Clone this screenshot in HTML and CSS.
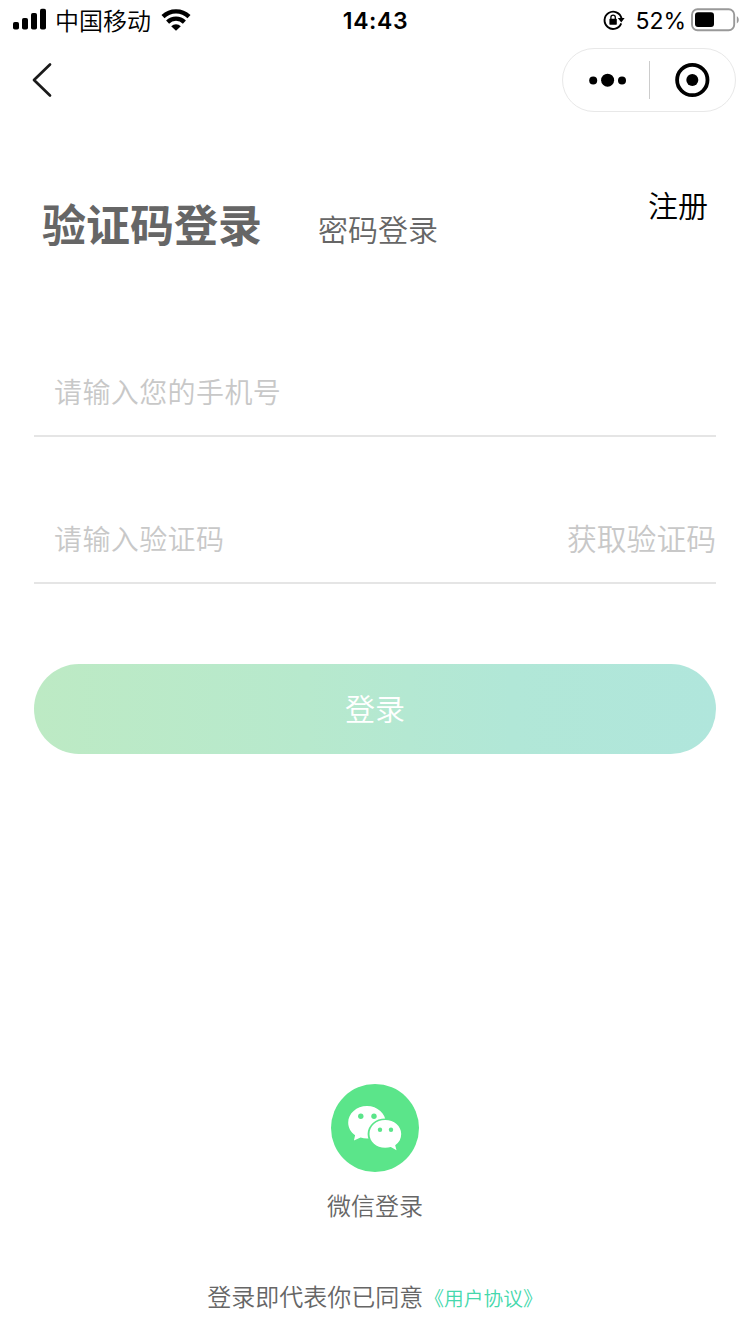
FILE: index.html
```
<!DOCTYPE html>
<html lang="zh-CN">
<head>
<meta charset="UTF-8">
<meta name="viewport" content="width=device-width, initial-scale=1.0">
<title>验证码登录</title>
<link rel="stylesheet" href="styles.css">
</head>
<body>
<div class="statusbar">
  <div class="status-left">
    <svg class="signal" width="34" height="22" viewBox="0 0 34 22">
      <rect x="0" y="14" width="6" height="7.500" rx="1.800"/>
      <rect x="9" y="10" width="6" height="11.500" rx="1.800"/>
      <rect x="18" y="5" width="6" height="16.500" rx="1.800"/>
      <rect x="27" y="0.800" width="6" height="20.700" rx="1.800"/>
    </svg>
    <span class="carrier">中国移动</span>
    <svg class="wifi" width="30" height="22" viewBox="0 0 30 22">
      <path d="M2 7.600a18.600 18.600 0 0 1 26 0M6.600 13.100a12 12 0 0 1 16.800 0" fill="none" stroke="#000" stroke-width="4.300"/>
      <path d="M10.200 17.200a7 7 0 0 1 9.600 0L15 21.800z"/>
    </svg>
  </div>
  <span class="clock">14:43</span>
  <div class="status-right">
    <svg class="lock" width="22" height="22" viewBox="0 0 22 22">
      <path d="M18.200 14.300A8.600 8.600 0 1 1 18.500 9.300" fill="none" stroke="#000" stroke-width="1.900"/>
      <path d="M14.800 9h6.800l-3.300 4.600z"/>
      <rect x="6.400" y="9.800" width="7.400" height="5.900" rx="0.600"/>
      <path d="M7.900 10V8.300a2.200 2.200 0 0 1 4.400 0V10" fill="none" stroke="#000" stroke-width="1.300"/>
    </svg>
    <span class="percent">52%</span>
    <svg class="battery" width="49" height="24" viewBox="0 0 49 24">
      <rect x="1" y="1.200" width="42.200" height="21" rx="5.500" fill="none" stroke="#999" stroke-width="1.900"/>
      <rect x="4" y="4.300" width="19" height="14.800" rx="3"/>
      <path d="M45.800 8.200c2.600 1.200 2.600 6 0 7.200z" fill="#999"/>
    </svg>
  </div>
</div>

<div class="navbar">
  <svg class="back" width="22" height="36" viewBox="0 0 22 36">
    <path d="M19 2.500L3 18l16 15.500" fill="none" stroke="#1a1a1a" stroke-width="2.700" stroke-linecap="round" stroke-linejoin="round"/>
  </svg>
  <div class="capsule">
    <svg class="more" width="38" height="14" viewBox="0 0 38 14">
      <circle cx="4.200" cy="7.600" r="4"/>
      <circle cx="18.600" cy="7.200" r="6.500"/>
      <circle cx="33" cy="7.600" r="4"/>
    </svg>
    <span class="capsule-line"></span>
    <svg class="close" width="36" height="36" viewBox="0 0 36 36">
      <circle cx="18.300" cy="18" r="15.200" fill="none" stroke="#000" stroke-width="3.800"/>
      <circle cx="18.300" cy="18" r="6"/>
    </svg>
  </div>
</div>

<main class="login">
  <div class="tabs">
    <h1 class="tab-active">验证码登录</h1>
    <span class="tab">密码登录</span>
    <a class="register">注册</a>
  </div>

  <form class="form">
    <div class="field">
      <input class="input" type="tel" placeholder="请输入您的手机号">
    </div>
    <div class="field">
      <input class="input" type="text" placeholder="请输入验证码">
      <span class="get-code">获取验证码</span>
    </div>
    <button class="submit" type="button">登录</button>
  </form>
</main>

<footer class="bottom">
  <svg class="wechat" width="88" height="88" viewBox="0 0 88 88">
    <circle cx="44" cy="44" r="44" fill="#5be58a"/>
    <path d="M36 22C25.500 22 17.200 29.500 17.200 38.500c0 5.300 2.600 9.600 6.900 12.700L22.900 56.600l6.700-3.100c2 .6 4.200 1 6.400 1 10.500 0 18.800-7.200 18.800-16S46.500 22 36 22z" fill="#fff"/>
    <ellipse cx="54.200" cy="50" rx="17.600" ry="15.600" fill="#5be58a"/>
    <path d="M54.200 36C45.300 36 38.500 42.100 38.500 49.900s6.800 13.900 15.700 13.900c2 0 3.900-.3 5.600-.8l5.700 3.200-1.300-5c3.900-2.600 6-6.700 6-11.300C70.200 42.100 63.100 36 54.200 36z" fill="#fff"/>
    <g fill="#5be58a">
      <circle cx="29.800" cy="32.300" r="2.700"/>
      <circle cx="43" cy="32.300" r="2.700"/>
      <circle cx="49" cy="45.700" r="2.200"/>
      <circle cx="60" cy="45.700" r="2.200"/>
    </g>
  </svg>
  <span class="wechat-text">微信登录</span>
  <p class="agree">登录即代表你已同意<a class="agree-link">《用户协议》</a></p>
</footer>
</body>
</html>
```
FILE: styles.css
```
* {
  box-sizing: border-box;
}
body {
  margin: 0;
  height: 1334px;
  display: flex;
  flex-direction: column;
  background-color: #fff;
  color: #000;
  font-family: "Noto Sans CJK SC", sans-serif;
  font-weight: 350;
}
svg {
  display: block;
  flex-shrink: 0;
}

/* 状态栏 */
.statusbar {
  display: grid;
  grid-template-columns: 1fr auto 1fr;
  align-items: center;
  height: 40px;
  padding: 0 10px 0 13px;
  line-height: 38px;
}
.status-left,
.status-right {
  display: flex;
  align-items: center;
}
.status-left {
  padding-bottom: 1px;
}
.status-right {
  justify-content: flex-end;
}
.signal {
  margin-bottom: 1px;
}
.carrier {
  margin: 0 10px 0 8px;
  font-size: 24px;
}
.clock {
  padding: 1px 2px 0 0;
  font-family: Inter, sans-serif;
  font-size: 23px;
  font-weight: 600;
  letter-spacing: 0.6px;
}
.percent {
  margin: 0 5px 0 10px;
  padding-top: 1px;
  font-family: Inter, sans-serif;
  font-size: 23px;
  font-weight: 400;
}

.navbar {
  display: flex;
  align-items: center;
  justify-content: space-between;
  height: 80px;
  padding: 0 14px 0 31px;
}
.capsule {
  display: flex;
  align-items: center;
  width: 174px;
  height: 64px;
  padding-left: 26px;
  border: 1px solid #e8e8e8;
  border-radius: 32px;
}
.capsule-line {
  width: 1px;
  height: 38px;
  margin: 0 24px 0 22px;
  background-color: #ccc;
}

.login {
  padding: 74px 34px 0;
}
.tabs {
  display: flex;
  align-items: flex-start;
  height: 60px;
  padding: 0 8px;
  color: #666;
}
.tab-active {
  margin: 0;
  font-size: 44px;
  font-weight: 700;
  line-height: 58px;
}
.tab {
  margin: 15px 0 0 56px;
  font-size: 30px;
  line-height: 38px;
}
.register {
  margin: -9px 0 0 auto;
  color: #000;
  font-size: 30px;
  line-height: 38px;
}

.form {
  display: flex;
  flex-direction: column;
  margin-top: 95px;
}
.field {
  display: flex;
  align-items: center;
  height: 88px;
  margin-bottom: 59px;
  padding: 0 0 2px 20px;
  border-bottom: 2px solid #e5e5e5;
}
.input {
  flex: 1;
  min-width: 0;
  height: 60px;
  padding: 0;
  border: 0;
  outline: 0;
  background: none;
  font-family: inherit;
  font-size: 28px;
  font-weight: 350;
  letter-spacing: 0.4px;
}
.input::placeholder {
  color: #c8c8c8;
}
.get-code {
  padding-bottom: 3px;
  color: #c8c8c8;
  font-size: 29.8px;
  line-height: 40px;
}
.submit {
  height: 90px;
  margin-top: 21px;
  padding: 0 0 5px;
  border: 0;
  border-radius: 45px;
  background: linear-gradient(90deg, #bdeac4, #b7e9cd 40%, #b1e7d7 70%, #b0e6dc);
  color: #fff;
  font-family: inherit;
  font-size: 30px;
  font-weight: 350;
}

.bottom {
  display: flex;
  flex-direction: column;
  align-items: center;
  margin-top: auto;
  padding-bottom: 16px;
  color: #666;
  font-size: 24px;
  line-height: 40px;
}
.wechat-text {
  margin-top: 13px;
}
.agree {
  margin: 51px 0 0;
}
.agree-link {
  margin-left: 1px;
  color: #45d8ac;
  font-size: 19.8px;
}
```
